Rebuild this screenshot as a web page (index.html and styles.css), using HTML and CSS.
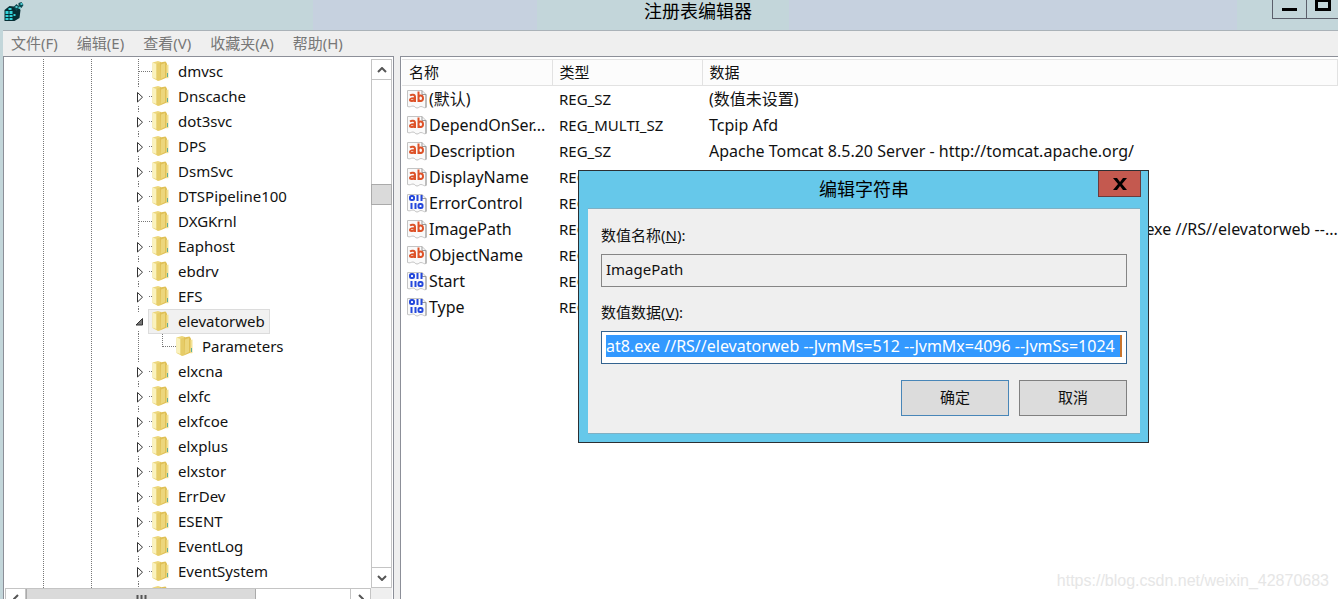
FILE: index.html
```
<!DOCTYPE html>
<html lang="zh-CN">
<head>
<meta charset="utf-8">
<title>注册表编辑器</title>
<link rel="stylesheet" href="styles.css">
</head>
<body>
<svg class="defs" aria-hidden="true">
  <symbol id="folder" viewBox="0 0 18 20">
    <path d="M.5 1.500 6 0l3 1v18l-3 1-5.500-3z" fill="#ecd67a"/>
    <path d="M.5 1.500 4.500 3v15L.5 16.500z" fill="#faf2bd"/>
    <path d="M4.500 3 9 1v18l-3 .8-1.500-1.300z" fill="#e6cc68"/>
    <path d="M8 1.500 13.500.5l1.500 2v14L9 19z" fill="#e0c056"/>
    <path d="M9 3.500 13 2v14l-4 2z" fill="#ecd67c"/>
    <path d="M14.500 4 16.500 3.500V17l-2 .5z" fill="#f3e296"/>
    <path d="M15 12h1v4h-1z" fill="#5fae9a"/>
  </symbol>
  <symbol id="leaf" viewBox="0 0 25 25">
    <path d="M11.500 0v25M12 12.500h13" stroke="#777" stroke-dasharray="1 1" fill="none"/>
  </symbol>
  <symbol id="closed" viewBox="0 0 25 25">
    <path d="M11.500 0v3M11.500 22v3M22 12.500h3" stroke="#777" stroke-dasharray="1 1" fill="none"/>
    <path d="M10.500 8.500v9.500L15.500 13.200z" fill="#fff" stroke="#333"/>
  </symbol>
  <symbol id="open" viewBox="0 0 25 25">
    <path d="M11.500 0v3M11.500 22v3M22 12.500h3" stroke="#777" stroke-dasharray="1 1" fill="none"/>
    <path d="M9 16h6.500V9.500z" fill="#777" stroke="#333"/>
  </symbol>
  <symbol id="child" viewBox="0 0 49 25">
    <path d="M11.500 0v25M35.500 0v13M36 12.500h13" stroke="#777" stroke-dasharray="1 1" fill="none"/>
  </symbol>
  <symbol id="page" viewBox="0 0 20 20">
    <path d="M.5 1.500H15l4 4v13c-2 1-3-1-5-1s-2 1.500-4 1.500-2-2-4-2-3 1.500-5.500.5z" fill="#fafafa" stroke="#c4c4c4"/>
    <path d="M15 1.500v4h4v13" fill="none" stroke="#999"/>
  </symbol>
  <symbol id="string" viewBox="0 0 20 20">
    <use href="#page"/>
    <g fill="none" stroke="#dd5228" stroke-width="2">
      <path d="M3 6.500c1.500-1 5-1.200 5 1.500v5M8 9.300c-2.500-.3-5 0-5 1.500s3 2 5-.3"/>
      <path d="M11.500 2.500V13M11.500 9c0-3.500 4.500-3 4.500.3s-3.500 3.500-4.500 1"/>
    </g>
  </symbol>
  <symbol id="binary" viewBox="0 0 20 20">
    <use href="#page"/>
    <g fill="none" stroke="#2448dc" stroke-width="2">
      <rect x="3" y="3" width="4" height="4" rx="1.500"/>
      <path d="M10.500 2v6M14.500 2v6M4.500 10v6M8.500 10v6"/>
      <rect x="11.500" y="11" width="4" height="4" rx="1.500"/>
    </g>
  </symbol>
</svg>

<div class="window">
  <header class="titlebar">
    <svg class="app-icon" viewBox="0 0 20 20" aria-hidden="true">
      <path d="M0 8 5 4l9 1 2 3-1 8-5 3H0z" fill="#062f35"/>
      <path d="M1 9h3v3H1zM5 9h3v3H5zM1 13h3v2H1zM5 13h3v2H5zM1 16h3v2H1zM5 16h3v2H5zM9 12h2v2H9zM4 6h3v2H4z" fill="#35d3da"/>
      <path d="m9 5 3-3 3 3-3 4zM14 1l3-1 2 3-2 3-3-2z" fill="#0c4b52"/>
      <path d="M11 4h2v2h-2zM16 1h2v2h-2zM14 5h2v2h-2z" fill="#4fc9d0"/>
    </svg>
    <h1 class="title">注册表编辑器</h1>
    <div class="window-buttons">
      <button class="window-button" aria-label="最小化"><svg width="15" height="18" viewBox="0 0 15 18"><path d="M0 8h15v3H0z"/></svg></button>
      <button class="window-button" aria-label="最大化"><svg width="16" height="18" viewBox="0 0 16 18"><path d="M1.500-1v10.500h13V-1M0 .5h16" fill="none" stroke="#000" stroke-width="3"/></svg></button>
    </div>
  </header>

  <div class="frame">
    <nav class="menu">
      <button class="menu-item">文件(F)</button>
      <button class="menu-item">编辑(E)</button>
      <button class="menu-item">查看(V)</button>
      <button class="menu-item">收藏夹(A)</button>
      <button class="menu-item">帮助(H)</button>
    </nav>

    <main class="panes">
      <section class="tree-pane">
        <ul class="tree">
          <li class="node"><svg class="twig"><use href="#leaf"/></svg><button class="key"><svg class="folder"><use href="#folder"/></svg>dmvsc</button></li>
          <li class="node"><svg class="twig"><use href="#closed"/></svg><button class="key"><svg class="folder"><use href="#folder"/></svg>Dnscache</button></li>
          <li class="node"><svg class="twig"><use href="#closed"/></svg><button class="key"><svg class="folder"><use href="#folder"/></svg>dot3svc</button></li>
          <li class="node"><svg class="twig"><use href="#closed"/></svg><button class="key"><svg class="folder"><use href="#folder"/></svg>DPS</button></li>
          <li class="node"><svg class="twig"><use href="#closed"/></svg><button class="key"><svg class="folder"><use href="#folder"/></svg>DsmSvc</button></li>
          <li class="node"><svg class="twig"><use href="#closed"/></svg><button class="key"><svg class="folder"><use href="#folder"/></svg>DTSPipeline100</button></li>
          <li class="node"><svg class="twig"><use href="#leaf"/></svg><button class="key"><svg class="folder"><use href="#folder"/></svg>DXGKrnl</button></li>
          <li class="node"><svg class="twig"><use href="#closed"/></svg><button class="key"><svg class="folder"><use href="#folder"/></svg>Eaphost</button></li>
          <li class="node"><svg class="twig"><use href="#closed"/></svg><button class="key"><svg class="folder"><use href="#folder"/></svg>ebdrv</button></li>
          <li class="node"><svg class="twig"><use href="#closed"/></svg><button class="key"><svg class="folder"><use href="#folder"/></svg>EFS</button></li>
          <li class="node"><svg class="twig"><use href="#open"/></svg><button class="key selected"><svg class="folder"><use href="#folder"/></svg>elevatorweb</button></li>
          <li class="node"><svg class="twig twig-child"><use href="#child"/></svg><button class="key"><svg class="folder"><use href="#folder"/></svg>Parameters</button></li>
          <li class="node"><svg class="twig"><use href="#closed"/></svg><button class="key"><svg class="folder"><use href="#folder"/></svg>elxcna</button></li>
          <li class="node"><svg class="twig"><use href="#closed"/></svg><button class="key"><svg class="folder"><use href="#folder"/></svg>elxfc</button></li>
          <li class="node"><svg class="twig"><use href="#closed"/></svg><button class="key"><svg class="folder"><use href="#folder"/></svg>elxfcoe</button></li>
          <li class="node"><svg class="twig"><use href="#closed"/></svg><button class="key"><svg class="folder"><use href="#folder"/></svg>elxplus</button></li>
          <li class="node"><svg class="twig"><use href="#closed"/></svg><button class="key"><svg class="folder"><use href="#folder"/></svg>elxstor</button></li>
          <li class="node"><svg class="twig"><use href="#closed"/></svg><button class="key"><svg class="folder"><use href="#folder"/></svg>ErrDev</button></li>
          <li class="node"><svg class="twig"><use href="#closed"/></svg><button class="key"><svg class="folder"><use href="#folder"/></svg>ESENT</button></li>
          <li class="node"><svg class="twig"><use href="#closed"/></svg><button class="key"><svg class="folder"><use href="#folder"/></svg>EventLog</button></li>
          <li class="node"><svg class="twig"><use href="#closed"/></svg><button class="key"><svg class="folder"><use href="#folder"/></svg>EventSystem</button></li>
          <li class="node"><svg class="twig"><use href="#closed"/></svg><button class="key" aria-label="下一项"><svg class="folder"><use href="#folder"/></svg></button></li>
        </ul>
        <div class="vscroll">
          <button class="scroll-button" aria-label="向上"><svg width="10" height="6" viewBox="0 0 10 6"><path d="m1 5 4-4 4 4"/></svg></button>
          <div class="vtrack"><div class="vthumb"></div></div>
          <button class="scroll-button" aria-label="向下"><svg width="10" height="6" viewBox="0 0 10 6"><path d="m1 1 4 4 4-4"/></svg></button>
        </div>
        <div class="hscroll">
          <button class="scroll-button" aria-label="向左"><svg width="6" height="10" viewBox="0 0 6 10"><path d="M5 1 1 5l4 4"/></svg></button>
          <div class="htrack"><div class="hthumb"><svg width="11" height="8" viewBox="0 0 11 8"><path d="M1.500 0v8M5.500 0v8M9.500 0v8"/></svg></div></div>
          <button class="scroll-button" aria-label="向右"><svg width="6" height="10" viewBox="0 0 6 10"><path d="m1 1 4 4-4 4"/></svg></button>
        </div>
      </section>

      <section class="list-pane">
        <table class="values">
          <colgroup><col class="col-name"><col class="col-type"><col></colgroup>
          <thead><tr><th>名称</th><th>类型</th><th>数据</th></tr></thead>
          <tbody>
            <tr><td><span class="name"><svg class="kind"><use href="#string"/></svg>(默认)</span></td><td>REG_SZ</td><td>(数值未设置)</td></tr>
            <tr><td><span class="name"><svg class="kind"><use href="#string"/></svg>DependOnSer...</span></td><td>REG_MULTI_SZ</td><td>Tcpip Afd</td></tr>
            <tr><td><span class="name"><svg class="kind"><use href="#string"/></svg>Description</span></td><td>REG_SZ</td><td>Apache Tomcat 8.5.20 Server - http://tomcat.apache.org/</td></tr>
            <tr><td><span class="name"><svg class="kind"><use href="#string"/></svg>DisplayName</span></td><td>REG_SZ</td><td>elevatorweb</td></tr>
            <tr><td><span class="name"><svg class="kind"><use href="#binary"/></svg>ErrorControl</span></td><td>REG_DWORD</td><td>0x00000001 (1)</td></tr>
            <tr><td><span class="name"><svg class="kind"><use href="#string"/></svg>ImagePath</span></td><td>REG_SZ</td><td>D:\Program Files\apache-tomcat-8.5.20-base\bin\tomcat8.exe //RS//elevatorweb --...</td></tr>
            <tr><td><span class="name"><svg class="kind"><use href="#string"/></svg>ObjectName</span></td><td>REG_SZ</td><td>LocalSystem</td></tr>
            <tr><td><span class="name"><svg class="kind"><use href="#binary"/></svg>Start</span></td><td>REG_DWORD</td><td>0x00000002 (2)</td></tr>
            <tr><td><span class="name"><svg class="kind"><use href="#binary"/></svg>Type</span></td><td>REG_DWORD</td><td>0x00000010 (16)</td></tr>
          </tbody>
        </table>
      </section>
    </main>
  </div>

  <form class="dialog" role="dialog" aria-labelledby="dialog-title">
    <div class="dialog-bar">
      <h2 class="title" id="dialog-title">编辑字符串</h2>
      <button class="close" type="button" aria-label="关闭"><svg width="14" height="12" viewBox="0 0 14 12"><path d="M0 0h4l3 4 3-4h4L9 6l5 6h-4L7 8l-3 4H0l5-6z"/></svg></button>
    </div>
    <div class="dialog-body">
      <label class="field-label" for="value-name">数值名称(<u>N</u>):</label>
      <input class="field" id="value-name" type="text" value="ImagePath" readonly>
      <label class="field-label" for="value-data">数值数据(<u>V</u>):</label>
      <input class="field field-active" id="value-data" type="text" value="at8.exe //RS//elevatorweb --JvmMs=512 --JvmMx=4096 --JvmSs=1024">
      <div class="actions">
        <button class="action action-default" type="button">确定</button>
        <button class="action" type="button">取消</button>
      </div>
    </div>
  </form>

  <div class="watermark">https://blog.csdn.net/weixin_42870683</div>
</div>
</body>
</html>
```

FILE: styles.css
```
* { box-sizing: border-box; }

body {
  margin: 0;
  color: #111;
  font: 15px/20px "Noto Sans", "Noto Sans CJK SC", sans-serif;
}

button, input { margin: 0; padding: 0; color: inherit; font: inherit; }
svg { display: block; flex: none; }

.defs { position: absolute; width: 0; height: 0; }

.window {
  position: relative;
  display: flex;
  flex-direction: column;
  height: 100vh;
  overflow: hidden;
  background: #c3d6da;
}

/* Title bar */
.titlebar {
  display: grid;
  grid-template-columns: 120px 1fr auto;
  flex: none;
  height: 30px;
  padding-left: 4px;
  background: linear-gradient(90deg,
    #c3d6da 313px, #c6d1df 313px 537px,
    #c3d6da 537px 789px, #c6d1df 789px calc(100% - 101px),
    #c3d6da calc(100% - 101px));
}
.app-icon { width: 21px; height: 20px; margin-top: 2px; }
.title { margin: 0; color: #000; font-size: 18px; font-weight: 400; line-height: 22px; text-align: center; }
.window-buttons { display: flex; height: 19px; border: solid #5b5f6b; border-width: 0 0 1px 1px; }
.window-button { display: flex; width: 31px; justify-content: center; border: 0; background: none; }
.window-button:first-child { width: 34px; border-right: 1px solid #5b5f6b; }

/* Menu */
.frame {
  display: flex;
  flex: 1;
  flex-direction: column;
  min-height: 0;
  margin-left: 3px;
  border-top: 1px solid #aab2b8;
  background: #efefef;
}
.menu { display: flex; flex: none; gap: 19px; height: 25px; padding: 0 8px 2px; color: #777; }
.menu-item { border: 0; background: none; }

.panes { display: grid; flex: 1; grid-template-columns: 391px 1fr; gap: 6px; min-height: 0; }

/* Tree */
.tree-pane {
  display: grid;
  grid-template: minmax(0, 1fr) 11px / minmax(0, 1fr) 21px;
  min-height: 0;
  padding: 2px 1px 0;
  border: solid #8c8f98;
  border-width: 1px 1px 0;
  background: #fff;
}
.tree {
  margin: 0;
  padding: 0 0 0 122px;
  overflow: hidden;
  list-style: none;
  background:
    repeating-linear-gradient(#777 0 1px, transparent 1px 2px) 38px 0 / 1px 100% no-repeat,
    repeating-linear-gradient(#777 0 1px, transparent 1px 2px) 86px 0 / 1px 100% no-repeat;
}
.node { display: flex; height: 25px; }
.twig { width: 25px; height: 25px; }
.twig-child { width: 49px; }
.key {
  display: flex;
  gap: 8px;
  align-items: center;
  height: 25px;
  margin-left: -4px;
  padding: 0 4px 2px 3px;
  border: 1px solid transparent;
  background: none;
  white-space: nowrap;
}
.key.selected { border-color: #dcdcdc; background: #f1f1f1; }
.folder { width: 18px; height: 20px; }

/* Scroll bars */
.scroll-button {
  display: flex;
  flex: none;
  align-items: center;
  justify-content: center;
  width: 21px;
  height: 21px;
  border: 1px solid #c4c4c4;
  background: #fff;
}
.scroll-button path { fill: none; stroke: #555; stroke-width: 2; }
.vscroll { display: flex; flex-direction: column; min-height: 0; }
.vtrack { flex: 1; padding-top: 104px; border: solid #c4c4c4; border-width: 0 1px; }
.vthumb { height: 21px; margin: 0 -1px; border: 1px solid #aaa; background: #dadada; }
.hscroll { display: flex; overflow: hidden; grid-column: 1 / 3; padding-right: 21px; background: #efefef; }
.htrack { flex: 1; height: 21px; border-top: 1px solid #c4c4c4; background: #fff; }
.hthumb {
  display: flex;
  align-items: center;
  justify-content: center;
  width: 71%;
  height: 20px;
  border: 1px solid #aaa;
  border-top: 0;
  background: #dadada;
}
.hthumb path { stroke: #555; stroke-width: 2; }

/* Value list */
.list-pane {
  min-width: 0;
  padding: 2px 0 0 1px;
  border: solid #8c8f98;
  border-width: 1px 0 0 1px;
  background: #fff;
}
.values { width: 100%; border-collapse: collapse; table-layout: fixed; }
.col-name { width: 150px; }
.col-type { width: 150px; }
.values th {
  height: 26px;
  padding: 0 7px 2px;
  border: solid #e2e2e2;
  border-width: 1px 1px 1px 0;
  background: #fcfcfc;
  font-weight: 400;
  text-align: left;
}
.values td {
  height: 26px;
  padding: 0 0 0 7px;
  overflow: hidden;
  font-size: 16px;
  white-space: nowrap;
}
.values td:first-child { padding-left: 5px; }
.values td:nth-child(2) { font-size: 15px; }
.name { display: flex; gap: 2px; align-items: center; }
.kind { width: 20px; height: 20px; }

/* Dialog */
.dialog {
  position: absolute;
  top: 170px;
  left: 578px;
  width: 571px;
  padding: 0 8px 8px 9px;
  border: 1px solid #2b2f33;
  background: #66c8ea;
}
.dialog-bar { display: grid; grid-template-columns: 42px 1fr 43px; height: 37px; margin-right: -1px; }
.dialog-bar .title { grid-column: 2; line-height: 36px; }
.close {
  display: flex;
  align-items: center;
  justify-content: center;
  height: 26px;
  border: 1px solid #6b3a3c;
  border-top: 0;
  background: #c4594f;
}
.dialog-body {
  display: flex;
  flex-direction: column;
  padding: 16px 13px 17px;
  border: solid #7fb0c4;
  border-width: 1px 0;
  background: #efefef;
}
.field-label { margin-bottom: 9px; }
.field {
  width: 100%;
  height: 33px;
  margin-bottom: 16px;
  padding: 3px 4px 6px;
  border: 1px solid #858585;
  outline: 0;
  background: #efefef;
}
.field:first-of-type { margin-bottom: 15px; }
.field-active {
  border-color: #33638f;
  color: #fff;
  font-size: 16px;
  background:
    linear-gradient(#c8742c, #c8742c) right / 2px 100% no-repeat content-box,
    linear-gradient(#39f, #39f) content-box,
    #fff;
}
.actions { display: flex; gap: 10px; justify-content: flex-end; }
.action { width: 108px; height: 36px; padding-bottom: 2px; border: 1px solid #808080; background: #dcdcdc; }
.action-default { border-color: #4886b8; }

.watermark {
  position: absolute;
  right: 9px;
  bottom: 8px;
  color: #e6e6e6;
  font: 16px/20px "Liberation Sans", sans-serif;
}
```
